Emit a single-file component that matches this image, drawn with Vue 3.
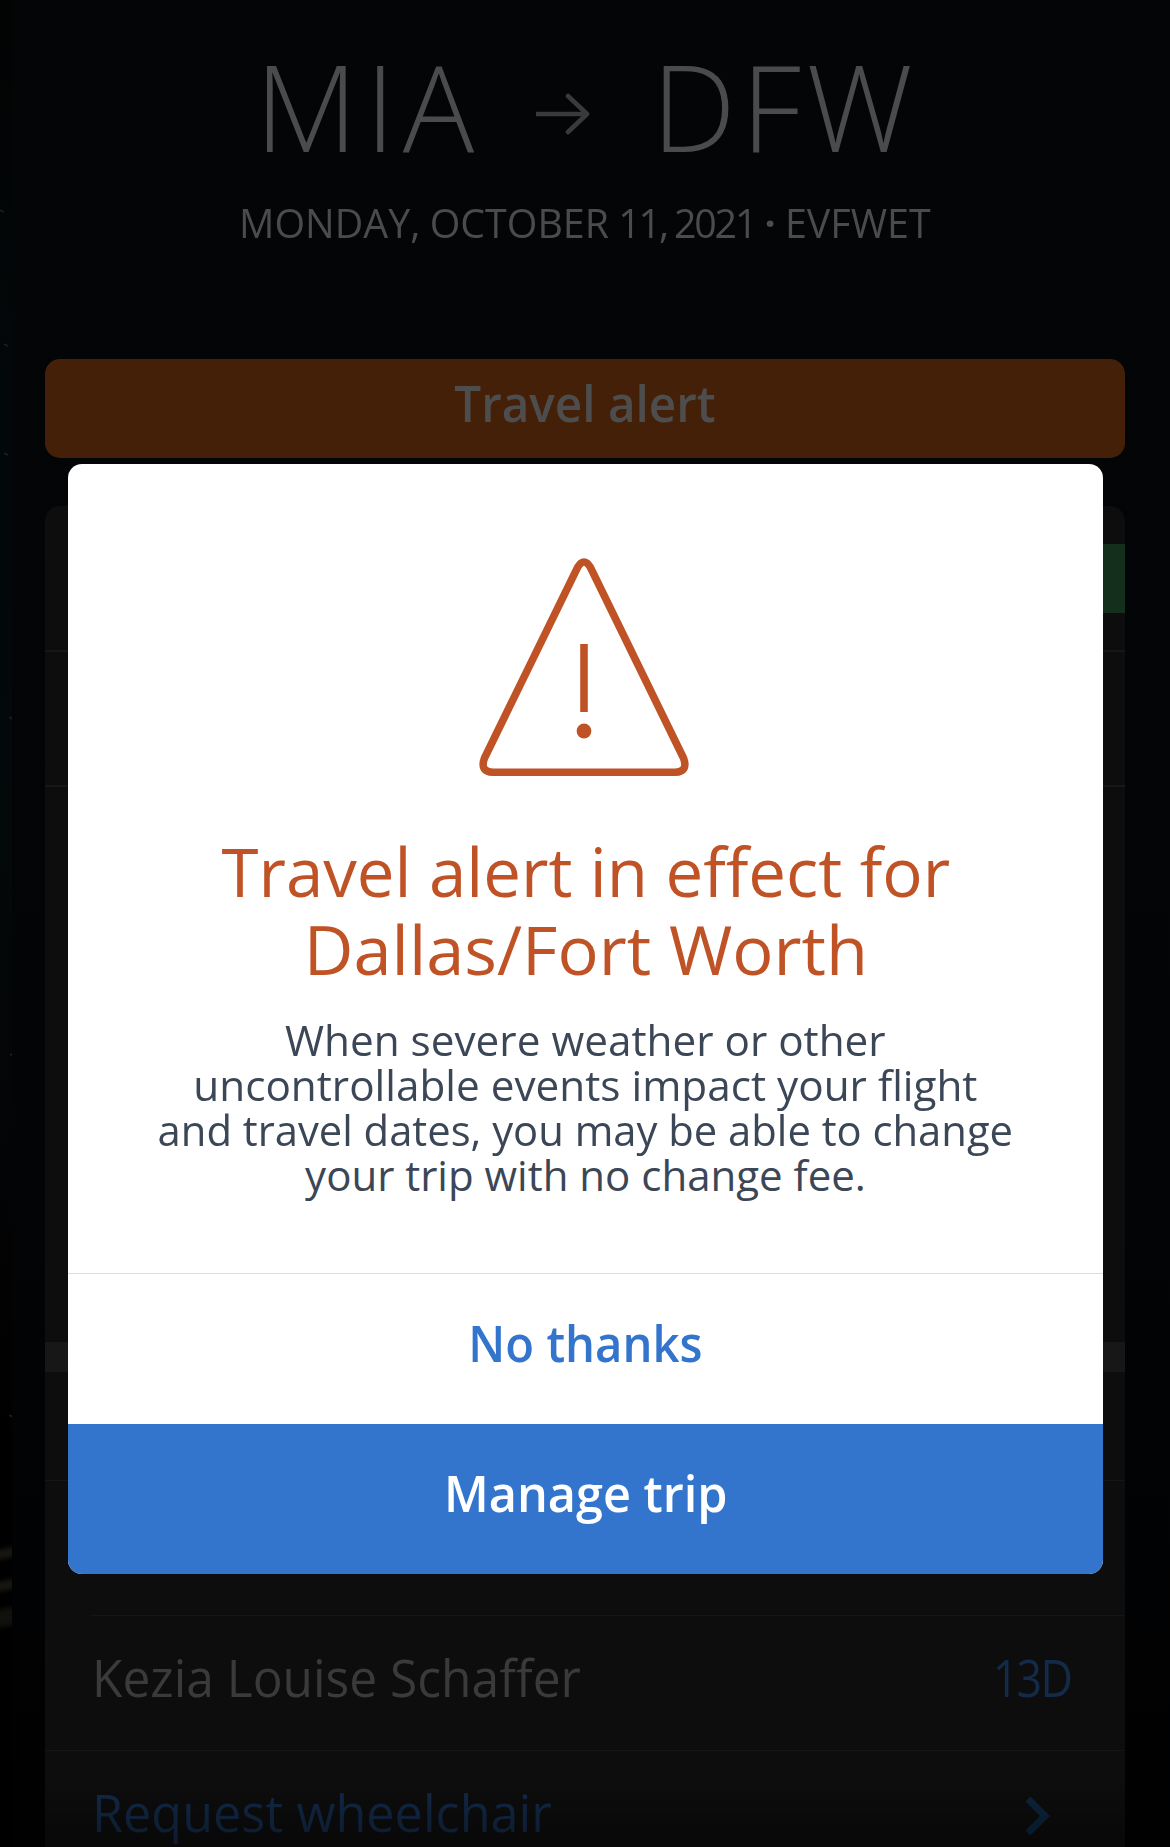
<template>
  <div class="trip-page">
    <div class="photo-strip">
      <i v-for="(s, i) in sparks" :key="i" class="spark" :style="{ left: s.x + 'px', top: s.y + 'px' }"></i>
      <i class="rock rock-a"></i>
      <i class="rock rock-b"></i>
      <i class="rock rock-c"></i>
    </div>

    <header class="trip-header">
      <div class="route">
        <span class="airport from">MIA</span>
        <svg class="arrow" width="54" height="42" viewBox="0 0 54 42" fill="none" stroke="currentColor" stroke-width="4.6" stroke-linejoin="round">
          <path d="M0 21H51" />
          <path d="M32 3L51 21L32 39" stroke-linecap="round" />
        </svg>
        <span class="airport to">DFW</span>
      </div>
      <p class="trip-date"><span>MONDAY, OCTOBER <em>11, 2021</em> <b>·</b> EVFWET</span></p>
    </header>

    <button class="alert-bar"><span>Travel alert</span></button>

    <section class="trip-card">
      <div class="status-row"><div class="status-tag"></div></div>
      <div class="info-row"></div>
      <div class="detail-row"></div>
      <div class="section-gap"></div>
      <div class="list-head"></div>
      <div class="list-first"></div>
      <div class="list-row">
        <span class="passenger">{{ passenger.name }}</span>
        <span class="seat">{{ passenger.seat }}</span>
      </div>
      <div class="list-row last">
        <span class="wheelchair">Request wheelchair</span>
        <svg class="chevron" width="26" height="40" viewBox="0 0 26 40" fill="none" stroke="currentColor" stroke-width="7">
          <path d="M3 3L20 20L3 37" />
        </svg>
      </div>
    </section>
    <div class="bottom-fade"></div>

    <div v-if="isVisible" class="modal-container">
      <div class="modal-body">
        <svg class="warning" width="210" height="218" viewBox="0 0 210 218" fill="none" stroke="currentColor" stroke-width="7.6">
          <path d="M98.5 9.5Q105 -1.5 111.5 9.5L204.5 200Q209.5 213.8 196 214.2H14Q0.5 213.8 5.5 200Z" />
          <path d="M105 86V154" />
          <circle cx="105" cy="173" r="7.4" fill="currentColor" stroke="none" />
        </svg>
        <h2>
          <span class="h-one">Travel alert in effect for</span>
          <span class="h-two">Dallas/Fort Worth</span>
        </h2>
        <p>
          <span class="p-one">When severe weather or other</span>
          <span class="p-two">uncontrollable events impact your flight</span>
          <span class="p-three">and travel dates, you may be able to change</span>
          <span class="p-four">your trip with no change fee.</span>
        </p>
      </div>
      <button class="btn-secondary" @click="isVisible = false"><span>No thanks</span></button>
      <button class="btn-primary"><span>Manage trip</span></button>
    </div>
  </div>
</template>

<script setup>
import { ref } from 'vue';

const isVisible = ref(true);

const passenger = { name: 'Kezia Louise Schaffer', seat: '13D' };

const sparks = [
  { x: 0, y: 210 },
  { x: 4, y: 344 },
  { x: 4, y: 453 },
  { x: 9, y: 717 },
  { x: 10, y: 1054 },
  { x: 9, y: 1415 }
];
</script>

<style>
body {
  margin: 0;
  background: #030506;
}
</style>

<style scoped>
.trip-page {
  position: relative;
  width: 1170px;
  height: 1847px;
  overflow: hidden;
  background: linear-gradient(#030506, #020405 60%, #010102);
  font-family: 'Open Sans', 'Noto Sans', sans-serif;
}

span {
  display: inline-block;
  white-space: nowrap;
}

.photo-strip {
  position: absolute;
  left: 0;
  top: 0;
  width: 12px;
  height: 100%;
  overflow: hidden;
  background: linear-gradient(#020303, #020709 20%, #03090a 42%, #040607 55%, #020203 70%, #000 80%);
}

.spark {
  position: absolute;
  width: 4px;
  height: 2px;
  background: #1a2022;
  transform: rotate(30deg);
}

.rock {
  position: absolute;
  left: -4px;
  width: 22px;
  height: 10px;
  background: #171510;
  filter: blur(2px);
  transform: rotate(-12deg);
}

.rock-a { top: 1548px; }
.rock-b { top: 1580px; }
.rock-c { top: 1608px; height: 18px; background: #11100d; }

.trip-header {
  height: 359px;
  color: #4b4b4c;
}

.route {
  box-sizing: border-box;
  display: flex;
  align-items: center;
  height: 196px;
  padding: 16px 0 0 255px;
}

.airport {
  font-size: 119px;
  font-weight: 300;
  line-height: 1;
}

.from {
  letter-spacing: 7.5px;
}

.to {
  letter-spacing: 5.5px;
}

.arrow {
  margin: 15px 62px 0 54px;
  color: #3a3a3b;
}

.trip-date {
  margin: 0;
  font-size: 39.5px;
  line-height: 54px;
  text-align: center;
}

.trip-date span {
  word-spacing: -1px;
  transform: scaleX(0.997);
}

.trip-date em {
  font-style: normal;
  letter-spacing: -2.2px;
}

button {
  display: block;
  padding: 0 0 14px;
  border: none;
  font-family: inherit;
  font-weight: 600;
  font-size: 51px;
  cursor: pointer;
}

.alert-bar {
  width: 1080px;
  height: 99px;
  margin: 0 45px;
  border-radius: 15px;
  background: #452008;
  color: #4d4d4d;
}

.alert-bar span {
  transform: scaleX(0.934);
}

.trip-card {
  box-sizing: border-box;
  width: 1080px;
  height: 1341px;
  margin: 48px 45px 0;
  border-radius: 15px 15px 0 0;
  background: #0d0d0d;
  overflow: hidden;
}

.status-row {
  height: 146px;
  padding-top: 38px;
  box-sizing: border-box;
  border-bottom: 2px solid #171717;
}

.status-tag {
  width: 300px;
  height: 69px;
  margin-left: auto;
  background: #14301c;
}

.info-row {
  height: 133px;
  border-bottom: 2px solid #171717;
}

.detail-row {
  height: 555px;
}

.section-gap {
  height: 30px;
  background: #171717;
}

.list-head {
  height: 108px;
  border-bottom: 1px solid #151515;
}

.list-first {
  height: 134px;
  margin-left: 45px;
  border-bottom: 1px solid #151515;
}

.list-row {
  box-sizing: border-box;
  display: flex;
  align-items: center;
  justify-content: space-between;
  height: 135px;
  padding: 0 52px 12px 47px;
  border-bottom: 1px solid #151515;
  font-size: 51.5px;
  color: #3a3a3a;
}

.passenger {
  transform: scaleX(0.965);
  transform-origin: left;
}

.seat,
.wheelchair {
  color: #132a49;
}

.seat {
  letter-spacing: -2px;
  margin-right: 2px;
  transform: scaleX(0.87);
  transform-origin: right;
}

.wheelchair {
  transform: scaleX(0.978);
  transform-origin: left;
}

.chevron {
  margin: 7px 22px 0 0;
  color: #0c2640;
}

.bottom-fade {
  position: absolute;
  left: 0;
  bottom: 0;
  width: 100%;
  height: 70px;
  background: linear-gradient(rgba(0, 0, 0, 0), rgba(0, 0, 0, 0.4));
}

.modal-container {
  position: absolute;
  left: 68px;
  top: 464px;
  width: 1035px;
  height: 1110px;
  border-radius: 14px;
  overflow: hidden;
  background: #fff;
}

.modal-body {
  box-sizing: border-box;
  display: flex;
  flex-direction: column;
  align-items: center;
  height: 810px;
  padding-top: 94px;
  border-bottom: 1px solid #dcdcde;
  text-align: center;
}

.warning {
  margin-right: 3px;
  color: #c05326;
}

h2 {
  display: flex;
  flex-direction: column;
  align-items: center;
  margin: 56px 0 0;
  font-size: 68px;
  font-weight: 400;
  line-height: 78px;
  color: #c05326;
}

.h-one {
  transform: scaleX(0.988);
}

.h-two {
  transform: scaleX(1.008);
}

.modal-body p {
  display: flex;
  flex-direction: column;
  align-items: center;
  margin: 29px 0 0;
  font-size: 42px;
  line-height: 45px;
  color: #3b4656;
}

.p-one,
.p-two {
  transform: scaleX(1.007);
}

.p-three {
  transform: scaleX(0.994);
}

.btn-secondary {
  width: 100%;
  height: 150px;
  background: #fff;
  color: #3375cc;
}

.btn-secondary span {
  transform: scaleX(0.926);
}

.btn-primary {
  width: 100%;
  height: 150px;
  background: #3375cc;
  color: #fff;
}

.btn-primary span {
  transform: scaleX(0.953);
}
</style>
